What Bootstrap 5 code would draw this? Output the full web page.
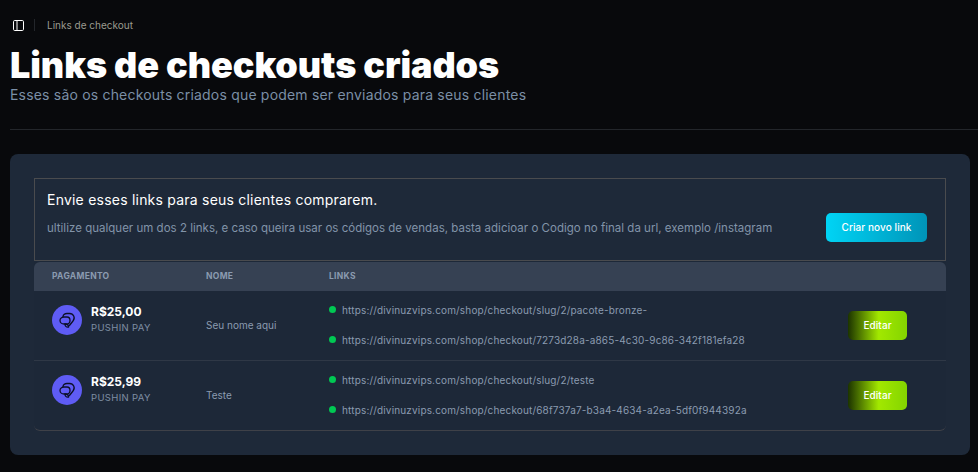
<!DOCTYPE html>
<html lang="pt-BR">
<head>
<meta charset="utf-8">
<title>Links de checkout</title>
<link href="https://cdn.jsdelivr.net/npm/bootstrap@5.3.0/dist/css/bootstrap.min.css" rel="stylesheet">
<style>
html,body{height:100%}
body{background:#08090c;font-family:Inter,"Liberation Sans",sans-serif;color:#94a3b8;overflow:hidden}
.topbar{height:16px;margin:17px 0 0 13px}
.sep{width:1px;height:12px;background:#23262b;margin:0 12px 0 10px}
.crumb{font-size:10px;color:#9a9a8f;line-height:16px}
.pagehead{padding:0 10px}
.ptitle{font-size:36px;font-weight:900;color:#fff;line-height:36px;margin:14px 0 0;letter-spacing:-.08px}
.psub{font-size:14px;color:#7b8fa6;line-height:17px;margin:3px 0 0;letter-spacing:.19px}
.rule{height:1px;background:#23262b;margin:26px 0 24px 10px}
.panel{background:#1e2939;border-radius:8px;margin:0 8px 0 10px;padding:24px;height:301px}
.tbl{width:912px;background:#1d2838;border-radius:0 0 6px 6px}
.intro{background:#1e2939;border:1px solid #4a4b4e;height:83px;padding:12px}
.intro-title{font-size:14px;font-weight:400;color:#fff;line-height:17px;margin:0 0 5px;letter-spacing:.22px}
.intro-text{font-size:11.5px;line-height:14px;color:#8294a9;margin:0;letter-spacing:.015px}
.btn-new{background:linear-gradient(to right,#00d4f5,#0094b8);color:#fff;font-size:10px;font-weight:500;border:0;border-radius:5px;width:101px;height:29px;padding:0;flex:none;margin:0 6px 0 0;letter-spacing:.08px}
.thead-row{background:#364153;height:29px;border-radius:6px 6px 0 0;font-size:8.5px;font-weight:700;color:#8b9bb0;letter-spacing:.3px;padding-left:18px;margin-top:1px}
.cpay{width:154px}
.cname{width:123px}
.clinks{width:519px}
.trow{height:70px;border-bottom:1px solid #2f3846;padding-left:18px}
.trow-last{border-bottom-color:#3f4148;border-radius:0 0 6px 6px}
.cpay-top{align-self:flex-start;padding-top:14px}
.avatar{width:30px;height:30px;background:#5f5cf5;border-radius:50%;flex:none;margin-right:9px}
.price{font-size:12px;font-weight:700;color:#fff;line-height:14px}
.gate{font-size:9.5px;color:#7f8ea3;line-height:14px;margin-top:2px;letter-spacing:.35px}
.nm{font-size:10px;color:#8b9bb0}
.linkstack{margin-bottom:2px}
.lnk{font-size:10px;color:#8b9bb0;line-height:14px;letter-spacing:.16px}
.dot{width:7px;height:7px;border-radius:50%;background:#00c853;flex:none;margin-right:6px}
.btn-edit{background:linear-gradient(to right,#1c3300,#a2e800 52%,#84d400);color:#fff;font-size:10px;font-weight:500;border:0;border-radius:5px;width:59px;height:29px;padding:0;flex:none;letter-spacing:.08px}
</style>
</head>
<body>
<header class="topbar d-flex align-items-center">
<svg width="11" height="11" viewBox="0 0 11 11" fill="none" stroke="#fff" stroke-width="1"><rect x=".5" y=".5" width="10" height="10" rx="1.2"/><path d="M4 .5v10"/></svg>
<span class="sep"></span>
<span class="crumb">Links de checkout</span>
</header>
<div class="pagehead">
<h1 class="ptitle">Links de checkouts criados</h1>
<p class="psub">Esses são os checkouts criados que podem ser enviados para seus clientes</p>
</div>
<div class="rule"></div>
<main class="panel">
<div class="tbl">
<section class="intro d-flex flex-column">
<h2 class="intro-title">Envie esses links para seus clientes comprarem.</h2>
<div class="d-flex justify-content-between align-items-center">
<p class="intro-text">ultilize qualquer um dos 2 links, e caso queira usar os códigos de vendas, basta adicioar o Codigo no final da url, exemplo /instagram</p>
<button class="btn btn-new">Criar novo link</button>
</div>
</section>
<div class="thead-row d-flex align-items-center">
<div class="cpay">PAGAMENTO</div><div class="cname">NOME</div><div class="clinks">LINKS</div>
</div>
<div class="trow d-flex align-items-center">
<div class="cpay cpay-top d-flex align-items-start">
<span class="avatar d-flex align-items-center justify-content-center"><svg width="18" height="18" viewBox="0 0 18 18" fill="none" stroke="#0c1028" stroke-width="1.3"><path d="M5 6C5 3.5 7 2.5 9 2.5h2.5A4.5 4.5 0 0 1 15 10L11 15"/><path d="M2 9.5C2 7.5 4 6 6 6h3c2 0 3 1.5 3 3.5S10.5 13 8.5 13H6c-2 0-4-1.5-4-3.5z"/><path d="M7 13c2.5 0 3.5 1 3.5 3-2.5.3-3.5-1-3.5-3z"/></svg></span>
<div><div class="price">R$25,00</div><div class="gate">PUSHIN PAY</div></div>
</div>
<div class="cname nm">Seu nome aqui</div>
<div class="clinks linkstack d-flex flex-column gap-3">
<div class="d-flex align-items-center lnk"><span class="dot"></span>https://divinuzvips.com/shop/checkout/slug/2/pacote-bronze-</div>
<div class="d-flex align-items-center lnk"><span class="dot"></span>https://divinuzvips.com/shop/checkout/7273d28a-a865-4c30-9c86-342f181efa28</div>
</div>
<button class="btn btn-edit">Editar</button>
</div>
<div class="trow trow-last d-flex align-items-center">
<div class="cpay cpay-top d-flex align-items-start">
<span class="avatar d-flex align-items-center justify-content-center"><svg width="18" height="18" viewBox="0 0 18 18" fill="none" stroke="#0c1028" stroke-width="1.3"><path d="M5 6C5 3.5 7 2.5 9 2.5h2.5A4.5 4.5 0 0 1 15 10L11 15"/><path d="M2 9.5C2 7.5 4 6 6 6h3c2 0 3 1.5 3 3.5S10.5 13 8.5 13H6c-2 0-4-1.5-4-3.5z"/><path d="M7 13c2.5 0 3.5 1 3.5 3-2.5.3-3.5-1-3.5-3z"/></svg></span>
<div><div class="price">R$25,99</div><div class="gate">PUSHIN PAY</div></div>
</div>
<div class="cname nm">Teste</div>
<div class="clinks linkstack d-flex flex-column gap-3">
<div class="d-flex align-items-center lnk"><span class="dot"></span>https://divinuzvips.com/shop/checkout/slug/2/teste</div>
<div class="d-flex align-items-center lnk"><span class="dot"></span>https://divinuzvips.com/shop/checkout/68f737a7-b3a4-4634-a2ea-5df0f944392a</div>
</div>
<button class="btn btn-edit">Editar</button>
</div>
</div>
</main>
<script src="https://cdn.jsdelivr.net/npm/bootstrap@5.3.0/dist/js/bootstrap.bundle.min.js"></script>
</body>
</html>
